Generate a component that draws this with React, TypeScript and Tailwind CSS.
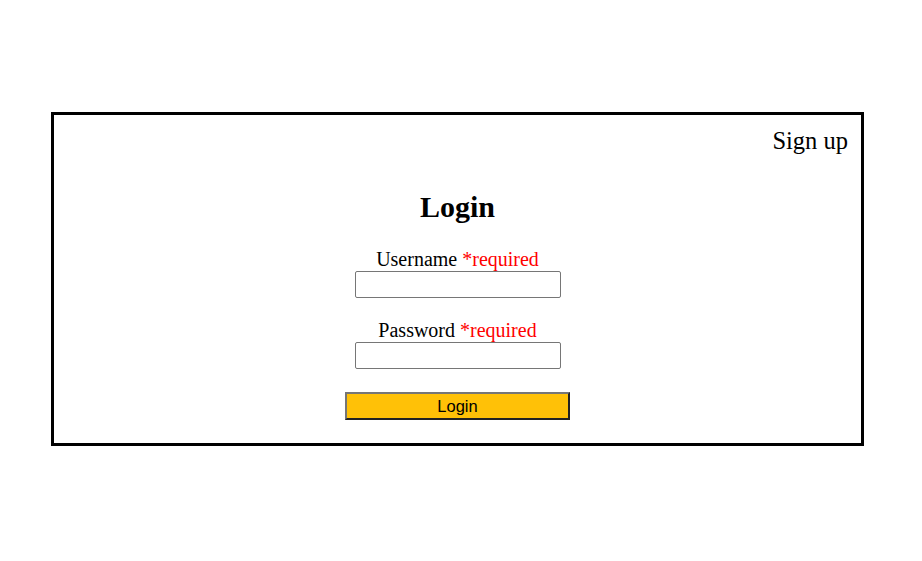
import React from "react";

export default function App() {
  return (
    <div className="w-full h-[561px] bg-white pt-[112px] pl-[51px] font-['Liberation_Serif',serif] text-black">
      <div className="w-[813px] h-[334px] border-[3px] border-black flex flex-col">
        <div className="pt-[12px] pr-[13px] text-right text-[24.5px] leading-[28px]">Sign up</div>

        <form className="flex flex-col items-center" onSubmit={(e) => e.preventDefault()}>
          <h2 className="mt-[35px] text-[30px] leading-[34px] font-bold">Login</h2>

          <label className="mt-[24px] text-[20px] leading-[23px] text-center">
            Username <span className="text-[#ff0000]">*required</span>
          </label>
          <input
            type="text"
            className="w-[206px] h-[27px] border border-[#767676] rounded-[2px] bg-white"
          />

          <label className="mt-[21px] text-[20px] leading-[23px] text-center">
            Password <span className="text-[#ff0000]">*required</span>
          </label>
          <input
            type="password"
            className="w-[206px] h-[27px] border border-[#767676] rounded-[2px] bg-white"
          />

          <button
            type="submit"
            className="mt-[23px] w-[225px] h-[28px] bg-[#ffc107] border-2 border-t-[#767676] border-l-[#767676] border-r-[#222222] border-b-[#222222] font-['Liberation_Sans',sans-serif] text-[16.5px] leading-[20px]"
          >
            Login
          </button>
        </form>
      </div>
    </div>
  );
}
